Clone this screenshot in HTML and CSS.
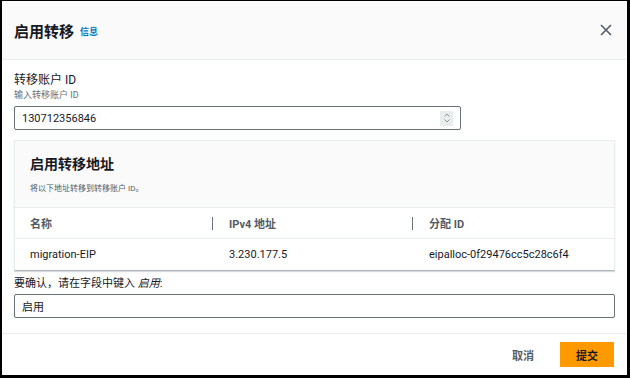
FILE: index.html
```html
<!DOCTYPE html>
<html lang="zh">
  <head>
    <meta charset="UTF-8" />
    <title>启用转移</title>
    <link rel="stylesheet" href="styles.css">
  </head>
  <body>
    <div class="modal">
      <div class="modal-header">
        <h2>启用转移</h2>
        <a class="info" href="#">信息</a>
        <span class="close">
          <svg width="12" height="12" viewBox="0 0 12 12"><path d="M1 1L11 11M11 1L1 11" stroke="#545b64" stroke-width="1.6" fill="none"/></svg>
        </span>
      </div>
      <div class="modal-body">
        <div class="field">
          <div class="label">转移账户 ID</div>
          <div class="desc">输入转移账户 ID</div>
          <div class="input account">
            <span>130712356846</span>
            <span class="spin">
              <svg width="8" height="12" viewBox="0 0 8 12"><path d="M1.5 4.5L4 2L6.5 4.5M1.5 7.5L4 10L6.5 7.5" stroke="#879596" stroke-width="1" fill="none"/></svg>
            </span>
          </div>
        </div>
        <div class="container">
          <div class="container-header">
            <h3>启用转移地址</h3>
            <div class="sub">将以下地址转移到转移账户 ID。</div>
          </div>
          <table>
            <thead>
              <tr>
                <th>名称</th>
                <th><span class="sep"></span>IPv4 地址</th>
                <th><span class="sep"></span>分配 ID</th>
              </tr>
            </thead>
            <tbody>
              <tr>
                <td>migration-EIP</td>
                <td>3.230.177.5</td>
                <td>eipalloc-0f29476cc5c28c6f4</td>
              </tr>
            </tbody>
          </table>
        </div>
        <div class="confirm">
          <div class="confirm-label">要确认，请在字段中键入 <i>启用</i>:</div>
          <div class="input">启用</div>
        </div>
      </div>
      <div class="modal-footer">
        <button class="btn-link">取消</button>
        <button class="btn-primary">提交</button>
      </div>
    </div>
  </body>
</html>
```

FILE: styles.css
```css
body {
  margin: 0;
  background-color: #000;
  font-family: Roboto, "Noto Sans CJK SC", sans-serif;
  color: #16191f;
}

.modal {
  background-color: #fff;
  margin: 1px 3px 3px 2px;
  height: 374px;
  display: flex;
  flex-direction: column;
}

.modal-header {
  background-color: #fafafa;
  border-bottom: 1px solid #eaeded;
  height: 58px;
  flex-shrink: 0;
  display: flex;
  align-items: center;
  padding: 0 12px;
}

h2 {
  margin: 0;
  font-size: 15px;
  font-weight: bold;
  color: #16191f;
}

.info {
  margin-left: 6px;
  margin-top: 3px;
  font-size: 9px;
  font-weight: bold;
  color: #0073bb;
  text-decoration: none;
}

.close {
  margin-left: auto;
  margin-right: 3px;
  display: flex;
}

.modal-body {
  padding: 12px 12px 0 12px;
  flex: 1;
}

.label {
  font-size: 12px;
  line-height: 17px;
}

.desc {
  font-size: 9px;
  color: #687078;
  line-height: 13px;
  margin-bottom: 4px;
}

.input {
  border: 1px solid #687078;
  border-radius: 2px;
  height: 22px;
  padding: 0 7px;
  font-size: 11px;
  display: flex;
  align-items: center;
}

.account {
  width: 431px;
}

.spin {
  margin-left: auto;
  background-color: #eaeded;
  width: 13px;
  height: 15px;
  display: flex;
  align-items: center;
  justify-content: center;
}

.container {
  margin-top: 10px;
  border: 1px solid #eaeded;
  border-bottom: 1px solid #aab7b8;
  box-shadow: 0 1px 1px rgba(0, 22, 31, 0.15);
}

.container-header {
  background-color: #fafafa;
  padding: 13px 15px 14px;
  border-bottom: 1px solid #eaeded;
}

h3 {
  margin: 0 0 8px 0;
  font-size: 14px;
  font-weight: bold;
  line-height: 20px;
}

.sub {
  font-size: 8px;
  color: #545b64;
}

table {
  width: 100%;
  border-collapse: collapse;
  font-size: 11px;
}

th {
  text-align: left;
  font-weight: bold;
  color: #545b64;
  height: 30px;
  border-bottom: 1px solid #eaeded;
  padding: 0 0 0 15px;
  position: relative;
}

.sep {
  position: absolute;
  left: -2px;
  top: 9px;
  height: 13px;
  border-left: 1px solid #687078;
}

td {
  height: 31px;
  padding: 0 0 0 15px;
}

th:nth-child(1), td:nth-child(1) {
  width: 184px;
}

th:nth-child(2), td:nth-child(2) {
  width: 185px;
}

.confirm {
  margin-top: 5px;
}

.confirm-label {
  font-size: 11px;
  line-height: 16px;
  margin-bottom: 2px;
}

.modal-footer {
  border-top: 1px solid #eaeded;
  height: 41px;
  flex-shrink: 0;
  display: flex;
  align-items: center;
  justify-content: flex-end;
  padding: 0 13px 0 0;
}

button {
  font-family: inherit;
  font-size: 11px;
  font-weight: bold;
  border: none;
  cursor: pointer;
}

.btn-link {
  background: none;
  color: #545b64;
  margin-right: 20px;
}

.btn-primary {
  background-color: #ff9900;
  color: #16191f;
  width: 54px;
  height: 25px;
}
```
